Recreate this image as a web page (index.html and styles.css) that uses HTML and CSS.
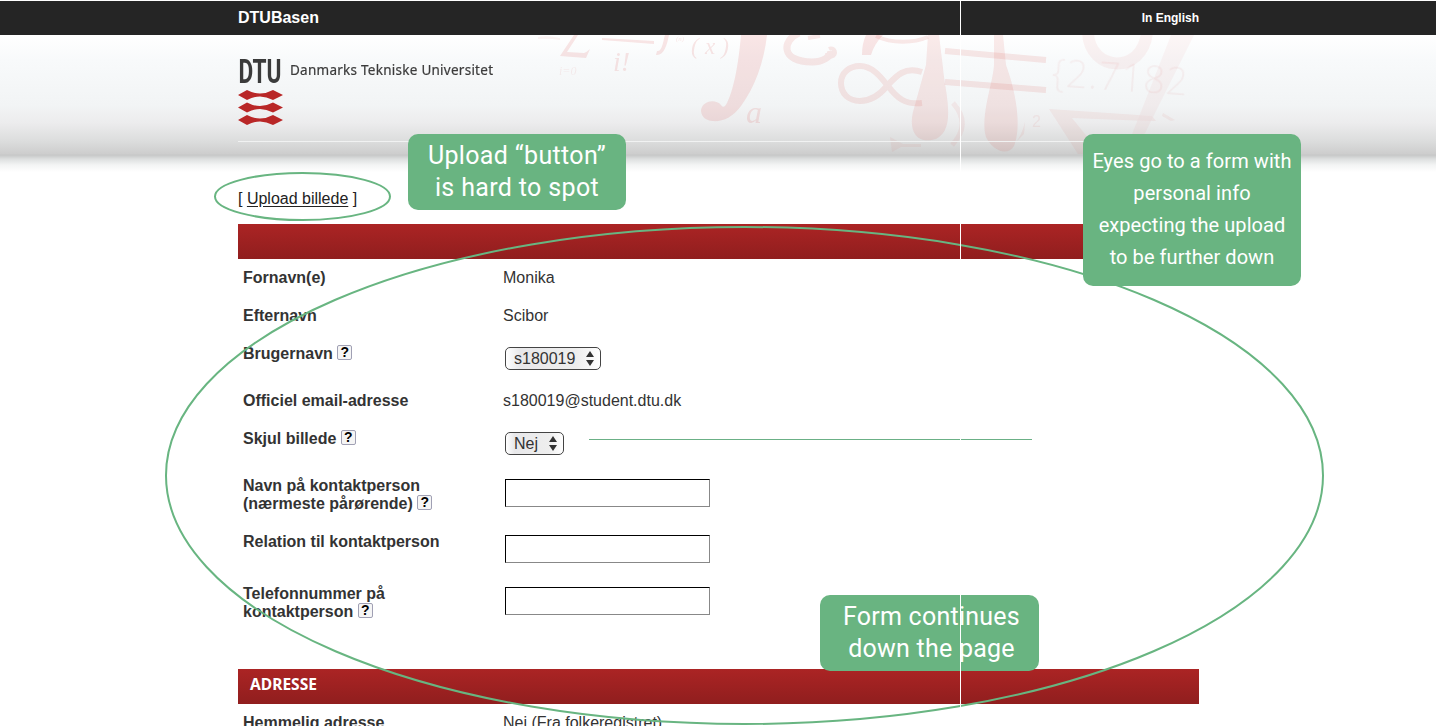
FILE: index.html
```
<!DOCTYPE html>
<html lang="da">
<head>
<meta charset="utf-8">
<title>DTUBasen</title>
<link rel="stylesheet" href="styles.css">
</head>
<body>
<div class="page">
  <div class="topbar">
    <div class="wrap topbar-inner">
      <span class="site-name">DTUBasen</span>
      <a class="lang">In English</a>
    </div>
  </div>
  <header class="header">
    <svg class="art" width="700" height="119" viewBox="520 35 700 119">
      <g fill="#d9534f" font-family="Liberation Serif, serif" opacity=".14">
        <path d="M538 37q10-2 22 1v2q-12-2-22-1z" opacity=".5"/>
        <path d="M578 35L567 52L584 53Q587 52 590 49L586 58L560 56L574 35Z"/>
        <text x="559" y="75" font-size="12" font-style="italic" opacity=".6">i=0</text>
        <path d="M602 38L654 41V44L602 40Z"/>
        <text x="613" y="71" font-size="28" font-style="italic">i!</text>
        <path d="M669 35C667 45 664 56 656 55L657 51C662 52 663 42 665 35Z"/>
        <text x="676" y="41" font-size="7" font-style="italic">(n)</text>
        <text x="691" y="54" font-size="23" font-style="italic" textLength="38">(x)</text>
        <path d="M741 35H767C764 62 755 87 741 106C732 118 722 122 712 121C704 120 701 115 701 110C703 100 716 99 721 105C723 108 725 107 727 103C735 87 739 58 741 35Z"/>
        <text x="746" y="123" font-size="32" font-style="italic">a</text>
        <path d="M866 35H883C877 41 873 48 871 55H862C862 48 863 41 866 35Z"/>
      </g>
      <g fill="none" stroke="#d9534f" opacity=".13">
        <path d="M799 33C782 40 780 62 812 62C824 62 831 56 831 51" stroke-width="7"/>
        <path d="M827 53A4 4 0 1 0 829 49M808 38L820 36" stroke-width="4"/>
        <path d="M922 72C905 66 896 76 887 86C878 97 870 101 860 101C848 101 841 93 841 83C841 73 849 66 860 66C872 66 880 76 888 86C897 98 905 105 922 103" stroke-width="6"/>
        <path d="M876 36C892 44 914 43 928 37" stroke-width="4"/>
        <path d="M945 51L1046 60M945 82L1046 90" stroke-width="6"/>
        <path d="M953 103Q972 124 952 145" stroke-width="5" opacity=".6"/>
        <path d="M1088 33C1090 72 1142 75 1147 33" stroke-width="12" opacity=".5"/>
      </g>
      <g fill="#d9534f" opacity=".12">
        <path d="M928 35H939L943 68C945 92 957 129 936 139C915 145 909 129 913 112L926 65Z"/>
        <path d="M994 35H1003L1006 65C1016 92 1022 127 1014 146C1007 157 992 150 986 137C980 116 993 83 994 65Z"/>
        <path d="M890 137L903 144H921V147H901L892 152Z" opacity=".6"/>
        <path d="M1016 142Q1022 135 1025 122L1024 134Z" opacity=".7"/>
        <path d="M1049 109L1152 116L1156 121L1148 121L1072 118L1089 139V154H1078Z" opacity=".6"/>
        <path d="M1171 35H1194L1145 133L1136 154H1124L1140 114Z" opacity=".4"/>
        <path d="M1163 113L1175 120L1171 121L1162 116Z" opacity=".6"/>
        <text x="1032" y="127" font-family="Liberation Sans, sans-serif" font-size="16" opacity=".7">2</text>
      </g>
      <text class="art-number" x="1051" y="86" transform="rotate(4 1051 86)" textLength="136">{2.7182</text>
    </svg>
    <div class="wrap header-inner">
      <svg class="logo" width="262" height="72" viewBox="238 56 262 72">
        <text class="logo-dtu" x="238.5" y="83" textLength="43" lengthAdjust="spacingAndGlyphs">DTU</text>
        <text class="logo-name" x="290" y="75" textLength="203">Danmarks Tekniske Universitet</text>
        <g fill="#b92727">
          <path id="wave" d="M238 95L247 90Q260 97 273 90L283 95L273 100Q260 93 247 100Z"/>
          <use href="#wave" y="12.5"/>
          <use href="#wave" y="25"/>
        </g>
      </svg>
    </div>
  </header>
  <main class="wrap main">
    <div class="upload">[ <a class="upload-link">Upload billede</a> ]</div>
    <div class="section-bar"></div>
    <div class="form">
      <div class="row"><div class="label">Fornavn(e)</div><div class="value">Monika</div></div>
      <div class="row"><div class="label">Efternavn</div><div class="value">Scibor</div></div>
      <div class="row tall"><div class="label">Brugernavn <span class="help">?</span></div>
        <div class="select wide">s180019<svg width="8" height="15" viewBox="0 0 8 15"><path d="M4 0L8 6H0ZM4 15L0 9H8Z" fill="#333"/></svg></div></div>
      <div class="row"><div class="label">Officiel email-adresse</div><div class="value">s180019@student.dtu.dk</div></div>
      <div class="row tall"><div class="label">Skjul billede <span class="help">?</span></div>
        <div class="select">Nej<svg width="8" height="15" viewBox="0 0 8 15"><path d="M4 0L8 6H0ZM4 15L0 9H8Z" fill="#333"/></svg></div><div class="rule"></div></div>
      <div class="row contact"><div class="label">Navn på kontaktperson<br>(nærmeste pårørende) <span class="help">?</span></div><div class="field"></div></div>
      <div class="row relation"><div class="label">Relation til kontaktperson</div><div class="field"></div></div>
      <div class="row phone"><div class="label">Telefonnummer på<br>kontaktperson <span class="help">?</span></div><div class="field"></div></div>
    </div>
    <div class="section-bar"><svg width="80" height="35"><text class="section-title" x="12" y="21" textLength="67" lengthAdjust="spacingAndGlyphs">ADRESSE</text></svg></div>
    <div class="form">
      <div class="row"><div class="label">Hemmelig adresse</div><div class="value">Nej (Fra folkeregistret)</div></div>
    </div>
  </main>

  <svg class="rings" width="1436" height="726">
    <ellipse cx="302.5" cy="196.5" rx="87.5" ry="23.5"/>
    <ellipse cx="744.5" cy="475.5" rx="578.5" ry="248.5"/>
  </svg>
  <div class="callout callout-upload"><span>Upload “button”</span><span>is hard to spot</span></div>
  <div class="callout callout-eyes"><span>Eyes go to a form with</span><span>personal info</span><span>expecting the upload</span><span>to be further down</span></div>
  <div class="callout callout-more"><span>Form continues</span><span>down the page</span></div>
  <div class="seam"></div>
</div>
</body>
</html>
```
FILE: styles.css
```
* { box-sizing: border-box; }
body {
  margin: 0;
  background: #fff;
  color: #333;
  font: 16px/18px "Liberation Sans", Arial, sans-serif;
}
.page { position: relative; width: 1436px; height: 726px; overflow: hidden; }
.wrap { width: 961px; margin-left: 238px; }

.topbar { height: 35px; border-top: 1px solid #fff; background: #252525; color: #fff; font-weight: bold; }
.topbar-inner { display: flex; justify-content: space-between; align-items: center; height: 33px; }
.site-name { font-size: 16px; }
.lang { font-size: 12px; }

.header {
  position: relative;
  height: 137px;
  background: linear-gradient(#fff 0, #f8fafb 25px, #f2f4f5 70px, #ececed 88px, #dcdddd 106px, #cdcdcd 119px, #c6c7c7 120px, #dddfdf 124px, #f3f4f4 130px, #fff 137px);
}
.art { position: absolute; left: 520px; top: 0; filter: blur(.6px); }
.art-number { fill: #d9534f; fill-opacity: .07; font: 300 38px "Open Sans", "Noto Sans", sans-serif; }
.header-inner { position: relative; height: 107px; padding-top: 21px; border-bottom: 1px solid #f1f2f2; }
.logo { display: block; }
.logo-dtu { font: bold 33px "Roboto", sans-serif; fill: #3b3b3b; }
.logo-name { font: 13.5px "Noto Sans", sans-serif; fill: #3b3b3b; stroke: #3b3b3b; stroke-width: .2; }

.upload { height: 52px; padding-top: 18px; color: #222; }
.upload-link { text-decoration: underline; text-underline-offset: 2px; }
.section-bar { height: 35px; background: linear-gradient(#ab2424, #901e1e); }
.section-bar svg { display: block; }
.section-title { font: bold 16px "Noto Sans", sans-serif; fill: #fff; }

.row { display: flex; height: 38px; padding-left: 5px; }
.row.tall { height: 47px; }
.row.contact { height: 56px; }
.row.relation { height: 52px; }
.row.phone { height: 94px; }
.label { width: 260px; padding-top: 10px; font-weight: bold; }
.value { padding-top: 10px; }
.help {
  display: inline-block;
  width: 15px;
  height: 15px;
  border: 1px solid #a0a0b4;
  border-radius: 2px;
  background: #f5f5f5;
  color: #000;
  font-size: 14px;
  line-height: 13px;
  text-align: center;
  vertical-align: 2px;
  margin-bottom: -2px;
}
.select {
  display: flex;
  justify-content: space-between;
  align-items: center;
  width: 59px;
  height: 23px;
  margin: 12px 0 0 2px;
  padding: 0 6px 0 8px;
  border: 1px solid #444;
  border-radius: 5px;
  background: linear-gradient(90deg, #fff, #e8e8ea 15%, #eee 75%, #fff);
}
.select.wide { width: 96px; }
.rule { width: 443px; height: 1px; margin: 19px 0 0 25px; background: #6bb086; }
.field { width: 205px; height: 28px; margin: 12px 0 0 2px; border: 1px solid; border-color: #000 #888 #888 #000; background: #fff; }

.rings { position: absolute; left: 0; top: 0; fill: none; stroke: #68b581; stroke-width: 2; }
.callout {
  position: absolute;
  display: flex;
  flex-direction: column;
  align-items: center;
  justify-content: center;
  border-radius: 10px;
  background: #69b481;
  color: #fff;
  font: 25px/32px "Roboto", sans-serif;
  letter-spacing: .25px;
  white-space: nowrap;
}
.callout-upload { left: 408px; top: 134px; width: 218px; height: 76px; letter-spacing: .35px; }
.callout-eyes { left: 1083px; top: 134px; width: 218px; height: 152px; padding-bottom: 2px; font-size: 20px; letter-spacing: .07px; }
.callout-more { left: 820px; top: 595px; width: 219px; height: 76px; padding-left: 4px; }
.seam { position: absolute; left: 960px; top: 0; width: 1px; height: 707px; background: #fff; }
```
